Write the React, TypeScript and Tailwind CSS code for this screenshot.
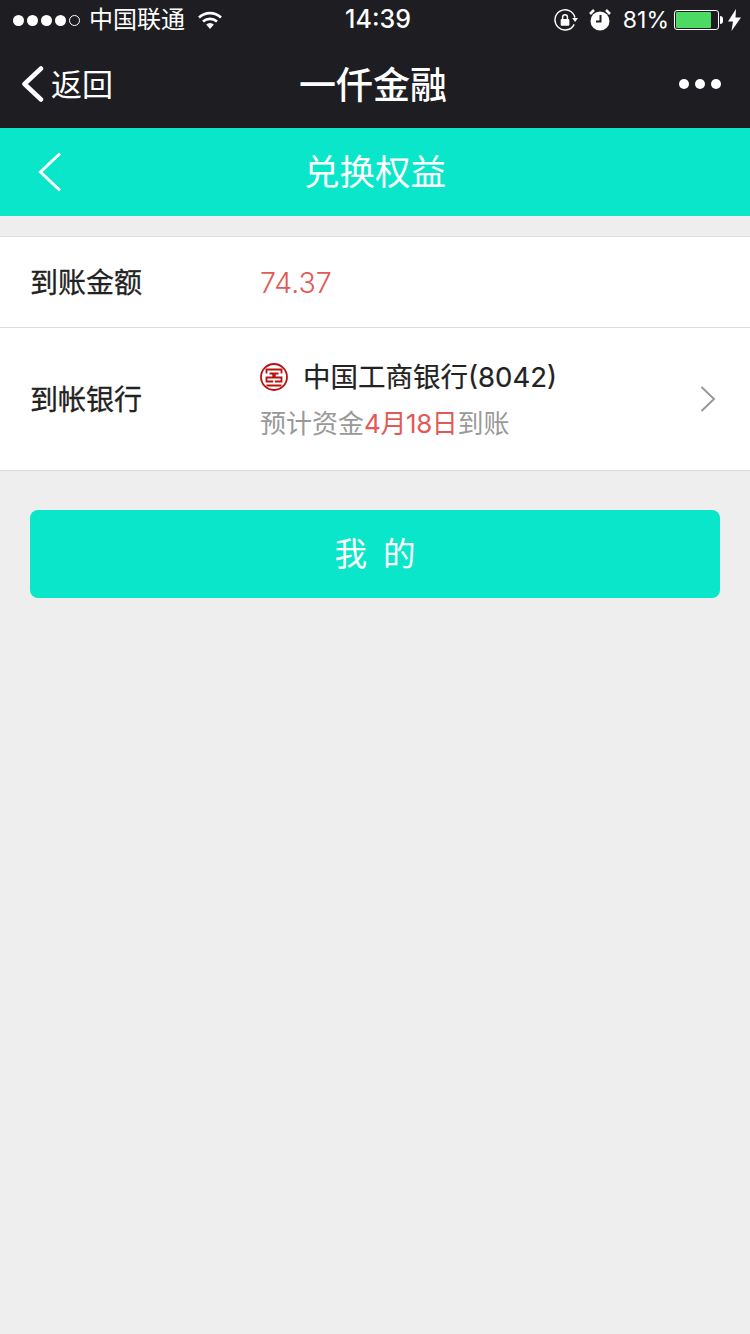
import React from 'react';

const FONT = "font-['Inter','Noto_Sans_CJK_SC',sans-serif]";

const StatusBar = () => (
  <div className="relative flex h-10 items-center justify-between pl-[13px] pr-[9px] text-white">
    <div className="flex items-center">
      <div className="flex items-center gap-[3px]">
        <span className="h-[11px] w-[11px] rounded-full bg-white" />
        <span className="h-[11px] w-[11px] rounded-full bg-white" />
        <span className="h-[11px] w-[11px] rounded-full bg-white" />
        <span className="h-[11px] w-[11px] rounded-full bg-white" />
        <span className="h-[11px] w-[11px] rounded-full border border-white" />
      </div>
      <span className="ml-[9px] text-[24px] leading-none">中国联通</span>
      <svg className="ml-[12px]" width="26" height="20" viewBox="0 0 26 20" fill="none" stroke="white" strokeWidth="2.6">
        <path d="M2 7.5a16 16 0 0 1 22 0" />
        <path d="M6 11.5a10.500 10.500 0 0 1 14 0" />
        <path d="M13 19l-3.800-4.400a5.500 5.500 0 0 1 7.600 0z" fill="white" stroke="none" />
      </svg>
    </div>
    <div className="absolute left-0 right-0 flex justify-center pl-[6px]">
      <span className="text-[25px] font-medium">14:39</span>
    </div>
    <div className="flex items-center">
      <svg width="25" height="25" viewBox="0 0 26 26" fill="none" stroke="white" strokeWidth="1.500">
        <path d="M22 17a10.500 10.500 0 1 1 .8-7" />
        <path d="M20 10.500h6l-3 4z" fill="white" stroke="none" />
        <rect x="8" y="11.500" width="9" height="7" rx="1" fill="white" stroke="none" />
        <path d="M10 12V9.500a2.500 2.500 0 0 1 5 0V12" />
      </svg>
      <svg className="ml-[10px]" width="24" height="24" viewBox="0 0 24 24">
        <circle cx="12" cy="13" r="9.500" fill="white" />
        <path d="M12.500 7v6.500H8" fill="none" stroke="#1e1d22" strokeWidth="2" />
        <path d="M2 6l4-4M22 6l-4-4" stroke="white" strokeWidth="2.500" />
      </svg>
      <span className="ml-[11px] text-[23px] leading-none">81%</span>
      <div className="ml-[5px] flex h-[20px] w-[45px] items-center rounded-[3px] border border-white p-[1px]">
        <div className="h-full w-[35px] rounded-[1px] bg-[#4cd964]" />
      </div>
      <span className="ml-[1px] h-[8px] w-[3px] rounded-r bg-white" />
      <svg className="ml-[5px]" width="13" height="22" viewBox="0 0 13 22">
        <path d="M8 0L0 12.500h5L3.500 22 13 8.500H7.500z" fill="white" />
      </svg>
    </div>
  </div>
);

const NavBar = () => (
  <div className="flex h-[88px] items-center pl-[21px] pr-[29px] text-white">
    <svg width="24" height="36" viewBox="0 0 24 36" fill="none" stroke="white" strokeWidth="4.500" strokeLinecap="round" strokeLinejoin="round">
      <path d="M20 2.500L3.500 18 20 33.500" />
    </svg>
    <span className="ml-[6px] pt-[2px] text-[31px]">返回</span>
    <span className="flex-1 pr-[46px] pt-1 text-center text-[37px] font-medium">一仟金融</span>
    <div className="flex items-center gap-[6px]">
      <span className="h-[10px] w-[10px] rounded-full bg-white" />
      <span className="h-[10px] w-[10px] rounded-full bg-white" />
      <span className="h-[10px] w-[10px] rounded-full bg-white" />
    </div>
  </div>
);

const IcbcLogo = () => (
  <svg width="28" height="28" viewBox="0 0 28 28" fill="none" stroke="#b8120f" strokeWidth="1.800">
    <circle cx="14" cy="14" r="13" strokeWidth="1.800" />
    <path d="M6.500 10.500V6.500h15v4M6.500 22.500h15" />
    <path d="M9.500 10.500h3.700v4H6.500V18.500h6.700M18.500 10.500h-3.700v4h6.700V18.500h-6.700" />
  </svg>
);

const App = () => (
  <div className={`${FONT} flex min-h-[1334px] flex-col bg-[#eeeeee]`}>
    <div className="bg-[#1e1d22]">
      <StatusBar />
      <NavBar />
    </div>
    <div className="flex h-[88px] items-center bg-[#0ae6ca] pl-[38px] text-white">
      <svg width="24" height="40" viewBox="0 0 24 40" fill="none" stroke="white" strokeWidth="3">
        <path d="M22 1.500L2.500 20 22 38.500" />
      </svg>
      <span className="flex-1 -translate-x-[31px] pt-[2px] text-center text-[35.5px]">兑换权益</span>
    </div>
    <div className="mt-5 border-y border-[#dddddd] bg-white">
      <div className="flex h-[90px] items-center pl-[30px] pt-[2px]">
        <span className="w-[230px] text-[28px] text-[#222222] [-webkit-text-stroke:0.3px_#222222]">到账金额</span>
        <span className="text-[28.5px] font-light text-[#e25a55]">74.37</span>
      </div>
      <div className="flex h-[143px] items-center border-t border-[#dddddd] px-[30px]">
        <span className="w-[230px] pt-[2px] text-[28px] text-[#222222] [-webkit-text-stroke:0.3px_#222222]">到帐银行</span>
        <div className="flex-1 pt-[2px]">
          <div className="flex items-center">
            <IcbcLogo />
            <span className="ml-[15px] text-[27.5px] leading-[36px] text-[#222222] [-webkit-text-stroke:0.2px_#222222]">中国工商银行(8042)</span>
          </div>
          <div className="mt-[11px] text-[26px] leading-[36px] text-[#999999]">
            预计资金<span className="tracking-[-0.4px] text-[#e25a55]">4月18日</span>到账
          </div>
        </div>
        <svg className="mr-[3px]" width="18" height="28" viewBox="0 0 18 28" fill="none" stroke="#999999" strokeWidth="2">
          <path d="M2.500 2L15 14 2.500 26" />
        </svg>
      </div>
    </div>
    <div className="mx-[30px] mt-[39px] flex h-[88px] items-center justify-center gap-4 rounded-[8px] bg-[#0ae6ca] pt-[2px] text-[32.5px] text-white">
      <span>我</span>
      <span>的</span>
    </div>
  </div>
);

export default App;
